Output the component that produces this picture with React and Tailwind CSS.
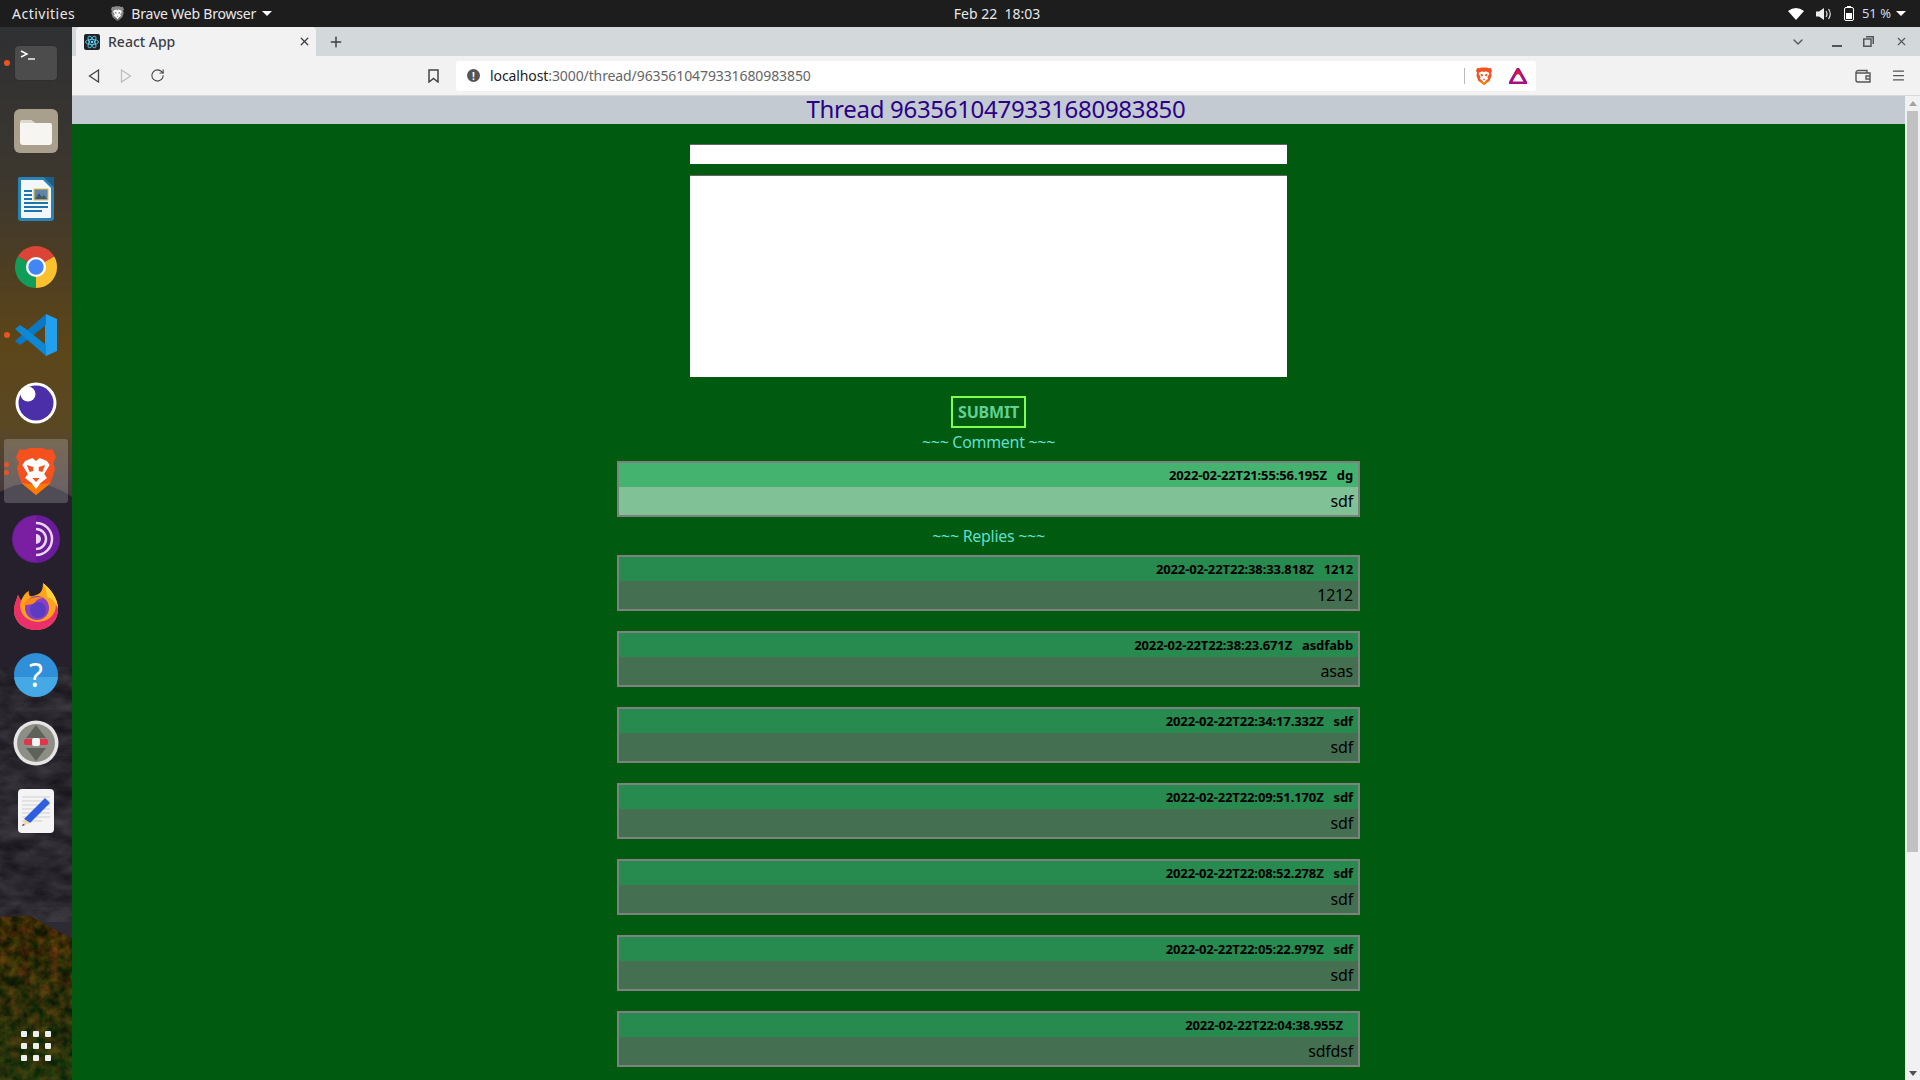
import React from 'react';
import { ChevronDown, X, Plus, RotateCw, Menu } from 'lucide-react';

const UI = { fontFamily: '"Noto Sans", "Open Sans", sans-serif' };

const replies = [
  { date: '2022-02-22T22:38:33.818Z', name: '1212', body: '1212' },
  { date: '2022-02-22T22:38:23.671Z', name: 'asdfabb', body: 'asas' },
  { date: '2022-02-22T22:34:17.332Z', name: 'sdf', body: 'sdf' },
  { date: '2022-02-22T22:09:51.170Z', name: 'sdf', body: 'sdf' },
  { date: '2022-02-22T22:08:52.278Z', name: 'sdf', body: 'sdf' },
  { date: '2022-02-22T22:05:22.979Z', name: 'sdf', body: 'sdf' },
  { date: '2022-02-22T22:04:38.955Z', name: '', body: 'sdfdsf' },
];

const BraveLion = ({ width = 44, height = 48, mono = false }) => (
  <svg width={width} height={height} viewBox="0 0 44 48" preserveAspectRatio="none">
    <path d="M9 3 L15 1 H29 L35 3 L40 2 L44 10 L41 16 L43 22 L38 36 L22 48 L6 36 L1 22 L3 16 L0 10 L4 2 Z" fill={mono ? '#8a8a8a' : '#f4511e'} />
    <path d="M22 38 L6 36 L22 48 L38 36 Z" fill={mono ? '#6d6d6d' : '#ff7a00'} />
    <path d="M10 14 L18 11 L22 14 L26 11 L34 14 L37 18 L31 27 L34 31 L27 36 L22 42 L17 36 L10 31 L13 27 L7 18 Z" fill="#fff" />
    <path d="M12 18 L19 20 L19 24 L15 25 Z M32 18 L25 20 L25 24 L29 25 Z M18 31 H26 L22 35 Z" fill={mono ? '#8a8a8a' : '#f4511e'} />
  </svg>
);

const TerminalIcon = () => (
  <div className="w-[44px] h-[36px] rounded-[5px] bg-[#4c4c4c] border border-[#2e2e2e] relative text-white">
    <svg width="20" height="14" viewBox="0 0 20 14" className="absolute left-[5px] top-[3px]">
      <path d="M1 2 L7 5 L1 8" stroke="#fff" strokeWidth="1.4" fill="none" />
      <path d="M8 10 H15" stroke="#fff" strokeWidth="1.4" />
    </svg>
  </div>
);

const FilesIcon = () => (
  <svg width="44" height="44" viewBox="0 0 44 44">
    <rect width="44" height="44" rx="6" fill="#a89f8c" />
    <path d="M6 14 Q6 11 9 11 H17 L21 14 H36 Q38 14 38 16 V33 Q38 36 35 36 H9 Q6 36 6 33 Z" fill="#f7f5f2" />
    <path d="M6 14 Q6 11 9 11 H17 L21 14 Z" fill="#dcd8d0" />
  </svg>
);

const WriterIcon = () => (
  <svg width="38" height="46" viewBox="0 0 38 46">
    <path d="M3 1 H27 L37 11 V42 Q37 45 34 45 H4 Q1 45 1 42 V3 Q1 1 3 1 Z" fill="#2a82b5" />
    <path d="M4 4 H26 L34 12 V41 Q34 42 33 42 H5 Q4 42 4 41 Z" fill="#f4f7fa" />
    <path d="M27 1 L37 1 V11 Z" fill="#1c5f8a" />
    <path d="M7 15 H15 M7 19 H15 M7 23 H15 M7 27 H31 M7 31 H31 M7 35 H25" stroke="#1c76ad" strokeWidth="2" />
    <rect x="17" y="13" width="14" height="11" fill="#5f86a5" stroke="#e5c14a" />
    <path d="M18 23 L22 17 L25 21 L27 19 L30 23 Z" fill="#3f5a70" />
  </svg>
);

const ChromeIcon = () => (
  <svg width="46" height="46" viewBox="0 0 48 48">
    <path d="M24 24 L5 13 A22 22 0 0 1 43 13 Z" fill="#db4437" />
    <path d="M24 24 L43 13 A22 22 0 0 1 24 46 Z" fill="#fbc02d" />
    <path d="M24 24 L24 46 A22 22 0 0 1 5 13 Z" fill="#0f9d58" />
    <circle cx="24" cy="24" r="10.5" fill="#fff" />
    <circle cx="24" cy="24" r="8" fill="#4285f4" />
  </svg>
);

const VsCodeIcon = () => (
  <svg width="44" height="44" viewBox="0 0 44 44">
    <path d="M32 1 L43 6 V38 L32 43 L31 33 V11 Z" fill="#23a0ed" />
    <path d="M32 1 L32 12 L12 28 L6 32 L1 28 Z" fill="#0b78c4" />
    <path d="M32 43 L32 32 L12 16 L6 12 L1 16 Z" fill="#0e88d4" />
  </svg>
);

const EclipseIcon = () => (
  <svg width="42" height="42" viewBox="0 0 42 42">
    <circle cx="21" cy="21" r="20.5" fill="#fff" />
    <circle cx="21" cy="21" r="17.5" fill="#4a2fa8" />
    <circle cx="13" cy="12" r="7.5" fill="#fff" />
  </svg>
);

const TorIcon = () => (
  <svg width="48" height="48" viewBox="0 0 48 48">
    <circle cx="24" cy="24" r="24" fill="#6a1b9a" />
    <path d="M24 1 A23 23 0 0 0 24 47 Z" fill="#7b1fa2" />
    <path d="M24 8 A16 16 0 0 1 24 40" fill="none" stroke="#e9d7f2" strokeWidth="2.5" />
    <path d="M24 14 A10 10 0 0 1 24 34" fill="none" stroke="#e9d7f2" strokeWidth="2.5" />
    <path d="M24 19 A5 5 0 0 1 24 29 Z" fill="#e9d7f2" />
  </svg>
);

const FirefoxIcon = () => (
  <svg width="46" height="48" viewBox="0 0 46 48">
    <path d="M23 47 C10 47 1 38 1 27 C1 22 3 18 5 12 L8 18 C10 13 13 9 16 8 C15 12 17 14 20 13 C27 11 30 9 30 0 C38 6 45 16 45 26 C45 38 36 47 23 47 Z" fill="#ffa31a" />
    <path d="M1 27 C1 22 3 18 5 12 L8 18 C6 24 8 30 12 34 C18 40 30 41 38 34 C41 31 43 27 43 22 L45 26 C45 38 36 47 23 47 C10 47 1 38 1 27 Z" fill="#ea2f6b" />
    <path d="M30 0 C38 6 45 16 45 26 C43 18 38 15 34 14 C34 9 32 4 30 0 Z" fill="#ffd23a" />
    <circle cx="24" cy="25" r="12" fill="#8a3fc4" />
    <path d="M10 23 C13 16 22 12 30 15 C24 16 22 18 22 21 C17 21 13 22 10 23 Z" fill="#ff8a1a" />
    <circle cx="25" cy="27" r="8" fill="#5b3bc0" />
  </svg>
);

const HelpIcon = () => (
  <div className="w-[44px] h-[44px] rounded-full bg-[#2f8fd8] relative flex items-center justify-center overflow-hidden">
    <div className="absolute left-0 right-0 bottom-0 h-[20px] bg-[#45a9e6]" />
    <span className="relative text-white text-[32px] leading-none" style={UI}>?</span>
  </div>
);

const UpdateIcon = () => (
  <svg width="46" height="46" viewBox="0 0 46 46">
    <circle cx="23" cy="23" r="22.5" fill="#e5e5e3" />
    <circle cx="23" cy="23" r="19" fill="#8d8f87" />
    <path d="M23 5 L33 18 H13 Z M23 41 L33 28 H13 Z" fill="#5f615b" />
    <rect x="11" y="19" width="24" height="6" rx="2" fill="#e8344a" />
    <rect x="19" y="18" width="8" height="8" rx="2" fill="#f4f4f4" />
  </svg>
);

const TextEditorIcon = () => (
  <svg width="36" height="44" viewBox="0 0 36 44">
    <rect width="36" height="44" rx="4" fill="#f4f4f4" />
    <path d="M4 8 H32 M4 12 H32 M4 16 H32 M4 20 H32 M4 24 H32 M4 28 H32 M4 32 H24" stroke="#cfcfcf" strokeWidth="1" />
    <path d="M27 9 L32 14 L12 34 L6 30 Z" fill="#2f5fe0" />
    <path d="M6 30 L12 34 L5 37 Z" fill="#f5d5a8" />
    <path d="M5 35 L7 36 L4 37 Z" fill="#333" />
  </svg>
);

const AppsGrid = () => (
  <div className="grid grid-cols-3 gap-[6px]">
    {Array.from({ length: 9 }).map((_, i) => (
      <div key={i} className="w-[6px] h-[6px] rounded-[1px] bg-[#efefef]" />
    ))}
  </div>
);

// the wallpaper seen through the dock: rock texture and the autumn forest at the bottom
const Wallpaper = () => (
  <svg width="72" height="1053" viewBox="0 0 72 1053" className="absolute left-0 top-0">
    <defs>
      <filter id="rock" x="0" y="0" width="100%" height="100%" colorInterpolationFilters="sRGB">
        <feTurbulence type="fractalNoise" baseFrequency="0.04 0.08" numOctaves="4" seed="7" />
        <feColorMatrix values="0.45 0 0 0 -0.03  0.45 0 0 0 -0.04  0.45 0 0 0 -0.03  0 0 0 0 0.45" />
      </filter>
      <filter id="forest" x="0" y="0" width="100%" height="100%" colorInterpolationFilters="sRGB">
        <feTurbulence type="fractalNoise" baseFrequency="0.1" numOctaves="3" seed="11" />
        <feColorMatrix values="0.75 0 0 0 -0.2  0.3 0.2 0 0 -0.1  0.1 0 0 0 -0.03  0 0 0 0 1" />
      </filter>
      <linearGradient id="forestTint" x1="0" y1="0" x2="0" y2="1">
        <stop offset="0" stopColor="#6a3000" stopOpacity="0.2" />
        <stop offset="0.5" stopColor="#2a3a10" stopOpacity="0.3" />
        <stop offset="1" stopColor="#1a4a14" stopOpacity="0.4" />
      </linearGradient>
      <clipPath id="forestClip">
        <path d="M0 890 L30 889 L50 900 L72 912 V1053 H0 Z" />
      </clipPath>
    </defs>
    <path d="M0 465 Q36 445 72 470 V880 H0 Z" fill="#25202c" />
    <rect x="0" y="640" width="72" height="255" filter="url(#rock)" />
    <g clipPath="url(#forestClip)">
      <rect x="0" y="885" width="72" height="168" filter="url(#forest)" />
      <rect x="0" y="885" width="72" height="168" fill="url(#forestTint)" />
    </g>
  </svg>
);

const dockIcons = [
  { icon: <TerminalIcon />, dot: 1 },
  { icon: <FilesIcon /> },
  { icon: <WriterIcon /> },
  { icon: <ChromeIcon /> },
  { icon: <VsCodeIcon />, dot: 1 },
  { icon: <EclipseIcon /> },
  { icon: <BraveLion width={40} height={48} />, dot: 2, active: true },
  { icon: <TorIcon /> },
  { icon: <FirefoxIcon /> },
  { icon: <HelpIcon /> },
  { icon: <UpdateIcon /> },
  { icon: <TextEditorIcon /> },
];

const Dock = () => (
  <div className="w-[72px] shrink-0 relative flex flex-col items-center justify-between pt-[2px] overflow-hidden bg-[linear-gradient(180deg,#2f3033_0%,#3d372e_15%,#5c4519_30%,#5a4824_38%,#4a3d3d_43%,#262030_51%,#2a2634_64%,#2f2d33_100%)]">
    <Wallpaper />
    <div className="w-full flex flex-col relative">
      {dockIcons.map((d, i) => (
        <div key={i} className="h-[68px] flex items-center justify-center relative">
          {d.active && <div className="absolute left-[4px] top-[2px] w-[64px] h-[64px] rounded-[3px] bg-white/20" />}
          {d.dot === 1 && <div className="absolute left-[4px] top-[31px] w-[6px] h-[6px] rounded-full bg-[#e95420]" />}
          {d.dot === 2 && (
            <div className="absolute left-[4px] top-[25px] flex flex-col gap-[3px]">
              <div className="w-[5px] h-[5px] rounded-full bg-[#e95420]" />
              <div className="w-[5px] h-[5px] rounded-full bg-[#e95420]" />
            </div>
          )}
          <div className="relative">{d.icon}</div>
        </div>
      ))}
    </div>
    <div className="h-[68px] flex items-center justify-center relative">
      <AppsGrid />
    </div>
  </div>
);

const TopBar = () => (
  <div className="h-[27px] shrink-0 bg-[#1d1d1d] text-[#e8e8e8] text-[14px] grid grid-cols-3 items-center">
    <div className="flex items-center">
      <span className="ml-[12px] tracking-[0.5px]">Activities</span>
      <span className="ml-[36px] mr-[7px]"><BraveLion width={13} height={15} mono /></span>
      <span className="tracking-[-0.2px]">Brave Web Browser</span>
      <div className="ml-[6px] w-0 h-0 border-x-[5px] border-x-transparent border-t-[5px] border-t-white" />
    </div>
    <div className="text-center text-[14px] pl-[74px] whitespace-pre">Feb 22  18:03</div>
    <div className="flex items-center justify-end pr-[14px]">
      <svg width="16" height="12" viewBox="0 0 16 12" className="mr-[12px]"><path d="M0 3 Q8 -3 16 3 L8 12 Z" fill="#fff" /></svg>
      <svg width="16" height="14" viewBox="0 0 16 14" className="mr-[12px]">
        <path d="M0 4.5 H3 L8 1 V13 L3 9.5 H0 Z" fill="#eee" />
        <path d="M10 4 Q12 7 10 10 M12.5 2 Q16 7 12.5 12" stroke="#ddd" strokeWidth="1.2" fill="none" />
      </svg>
      <svg width="10" height="15" viewBox="0 0 10 15" className="mr-[8px]">
        <rect x="0.5" y="1.5" width="9" height="13" rx="1.5" fill="none" stroke="#fff" />
        <rect x="3" y="0" width="4" height="2" fill="#fff" />
        <rect x="2" y="7" width="6" height="6" fill="#fff" />
      </svg>
      <span className="text-[13px] text-[#c8dcf0]">51 %</span>
      <div className="ml-[5px] w-0 h-0 border-x-[5px] border-x-transparent border-t-[5px] border-t-white" />
    </div>
  </div>
);

const TabStrip = () => (
  <div className="h-[29px] shrink-0 bg-[#d3d8db] flex items-end pl-[4px]">
    <div className="w-[240px] h-[29px] bg-[#f2f2f2] rounded-t-[4px] flex items-center pl-[8px] pr-[5px]">
      <svg width="16" height="16" viewBox="0 0 16 16">
        <rect width="16" height="16" rx="2" fill="#20232a" />
        <g fill="none" stroke="#61dafb" strokeWidth="0.8">
          <ellipse cx="8" cy="8" rx="6.5" ry="2.6" />
          <ellipse cx="8" cy="8" rx="6.5" ry="2.6" transform="rotate(60 8 8)" />
          <ellipse cx="8" cy="8" rx="6.5" ry="2.6" transform="rotate(120 8 8)" />
        </g>
        <circle cx="8" cy="8" r="1.3" fill="#61dafb" />
      </svg>
      <span className="ml-[8px] text-[14px] font-medium text-[#3b3f45] flex-1">React App</span>
      <X size={13} strokeWidth={2.4} className="text-[#3b3f45]" />
    </div>
    <div className="w-[40px] h-[29px] flex items-center justify-center">
      <Plus size={16} strokeWidth={2.2} className="text-[#3b3f45]" />
    </div>
    <div className="flex-1" />
    <div className="h-[29px] flex items-center text-[#555] mr-[12px]">
      <ChevronDown size={16} strokeWidth={2} className="mr-[26px]" />
      <div className="w-[10px] h-[2px] bg-[#555] mt-[8px] mr-[21px]" />
      <svg width="11" height="11" viewBox="0 0 11 11" className="mr-[21px]"><path d="M3 .75 H10.25 V8 M.75 3 H8 V10.25 H.75 Z" fill="none" stroke="#555" strokeWidth="1.5" /></svg>
      <X size={13} strokeWidth={2} />
    </div>
  </div>
);

const Toolbar = () => (
  <div className="h-[40px] shrink-0 bg-[#f2f2f2] border-b border-[#d8d8d8] flex items-center">
    <svg width="12" height="14" viewBox="0 0 12 14" className="ml-[16px]"><path d="M10.5 1 L1.5 7 L10.5 13 Z" fill="none" stroke="#444" strokeWidth="1.3" /></svg>
    <svg width="12" height="14" viewBox="0 0 12 14" className="ml-[20px]"><path d="M1.5 1 L10.5 7 L1.5 13 Z" fill="none" stroke="#bdbdbd" strokeWidth="1.3" /></svg>
    <RotateCw size={15} strokeWidth={1.7} className="ml-[18px] text-[#444]" />
    <svg width="11" height="14" viewBox="0 0 11 14" className="ml-[263px]"><path d="M1 1 H10 V13 L5.5 9.5 L1 13 Z" fill="none" stroke="#444" strokeWidth="1.5" /></svg>
    <div className="ml-[17px] w-[1080px] h-[30px] bg-white rounded-[3px] flex items-center pl-[11px] pr-[9px]">
      <div className="w-[13px] h-[13px] rounded-full bg-[#555] text-white text-[10px] font-bold flex items-center justify-center leading-none">!</div>
      <span className="ml-[10px] text-[14px] text-[#666] flex-1 tracking-[-0.1px]"><span className="text-[#222]">localhost</span>:3000/thread/9635610479331680983850</span>
      <div className="w-px h-[16px] bg-[#bbb] mr-[11px]" />
      <BraveLion width={16} height={18} />
      <svg width="18" height="16" viewBox="0 0 18 16" className="ml-[17px]">
        <path d="M9 1 L17 15 H1 Z" fill="none" stroke="#a3127f" strokeWidth="3" />
        <path d="M9 1 L13 8 L9 6 L5 8 Z" fill="#e8173a" />
      </svg>
    </div>
    <div className="flex-1" />
    <svg width="16" height="14" viewBox="0 0 16 14">
      <path d="M1 4 Q1 1.5 3.5 1.5 H12 V4 M1 4 V11 Q1 13 3 13 H15 V4 H1 Z M15 7 H11 V10 H15" fill="none" stroke="#555" strokeWidth="1.4" />
    </svg>
    <Menu size={15} strokeWidth={2} className="ml-[20px] mr-[14px] text-[#555]" />
  </div>
);

const Post = ({ item, headClass, bodyClass }) => (
  <div className="w-[743px] border-2 border-[#808080] text-black text-right">
    <div className={`h-[24px] flex items-center justify-end pr-[5px] pt-[2px] text-[13px] font-bold tracking-[-0.12px] ${headClass}`}>
      <span>{item.date}</span>
      {item.name ? <span className="ml-[10px]">{item.name}</span> : <span className="ml-[10px] w-[0px]" />}
    </div>
    <div className={`h-[28px] flex items-center justify-end pr-[5px] text-[16px] tracking-[-0.2px] ${bodyClass}`}>{item.body}</div>
  </div>
);

const Page = () => (
  <div className="flex-1 min-w-0 bg-[#005a0f] overflow-hidden flex flex-col items-center">
    <div className="w-full h-[28px] shrink-0 bg-[#c3cad2] text-center pl-[15px] text-[24px] leading-[26px] tracking-[-0.3px] text-[#2b0088]">
      Thread 9635610479331680983850
    </div>
    <input className="mt-[20px] w-[597px] h-[20px] shrink-0 bg-white border-t border-[#666]" />
    <textarea className="mt-[11px] w-[597px] h-[202px] shrink-0 bg-white border-t border-[#666] resize-none" />
    <button className="mt-[19px] w-[75px] h-[32px] shrink-0 border-2 border-[#7cff4f] text-[#62cf94] text-[16px] font-bold tracking-[-0.2px] leading-none">SUBMIT</button>
    <div className="h-[26px] pt-[2px] shrink-0 flex items-center text-[16px] text-[#5fdfcb] tracking-[-0.3px]">~~~ Comment ~~~</div>
    <div className="mt-[7px]">
      <Post item={{ date: '2022-02-22T21:55:56.195Z', name: 'dg', body: 'sdf' }} headClass="bg-[#44b36f]" bodyClass="bg-[#80c296]" />
    </div>
    <div className="h-[38px] shrink-0 flex items-center text-[16px] text-[#5fdfcb] tracking-[-0.3px]">~~~ Replies ~~~</div>
    <div className="flex flex-col gap-[20px]">
      {replies.map((r, i) => (
        <Post key={i} item={r} headClass="bg-[#278a4f]" bodyClass="bg-[#447051]" />
      ))}
    </div>
  </div>
);

const Scrollbar = () => (
  <div className="w-[15px] shrink-0 bg-[#f1f1f1] flex flex-col items-center">
    <div className="h-[15px] flex items-center justify-center"><div className="w-0 h-0 border-x-[4px] border-x-transparent border-b-[5px] border-b-[#a3a3a3]" /></div>
    <div className="w-[11px] h-[741px] bg-[#c1c1c1]" />
    <div className="flex-1" />
    <div className="h-[14px] flex items-center justify-center"><div className="w-0 h-0 border-x-[4px] border-x-transparent border-t-[5px] border-t-[#505050]" /></div>
  </div>
);

const App = () => {
  return (
    <div className="w-screen h-screen overflow-hidden flex flex-col" style={UI}>
      <TopBar />
      <div className="flex-1 min-h-0 flex">
        <Dock />
        <div className="flex-1 min-w-0 flex flex-col">
          <TabStrip />
          <Toolbar />
          <div className="flex-1 min-h-0 flex">
            <Page />
            <Scrollbar />
          </div>
        </div>
      </div>
    </div>
  );
};

export default App;
